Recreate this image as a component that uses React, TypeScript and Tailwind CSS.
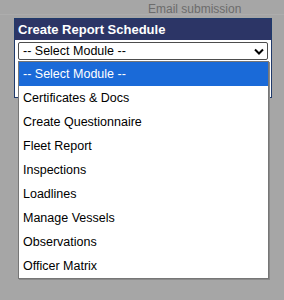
import React from "react";

const modules = [
  "-- Select Module --",
  "Certificates & Docs",
  "Create Questionnaire",
  "Fleet Report",
  "Inspections",
  "Loadlines",
  "Manage Vessels",
  "Observations",
  "Officer Matrix",
];

const App = () => {
  return (
    <div className="relative w-[284px] h-[300px] bg-[#a6a6a6] overflow-hidden font-['Liberation_Sans',Arial,sans-serif]">
      <div className="h-[15px] border-b border-[#adadad] relative">
        <span className="absolute left-[148px] top-[2px] text-[12px] leading-[15px] text-[#6c6c6c]">Email submission</span>
      </div>
      <div className="ml-[14px] mt-[3px] w-[258px] border border-[#1f3a6b] bg-white">
        <div className="h-[21px] bg-[#2c3566] px-[3px] text-[13px] leading-[22px] font-bold text-white">
          Create Report Schedule
        </div>
        <div className="px-[3px] pt-[2px] pb-[37px]">
          <div className="flex items-center justify-between h-[18px] border border-[#4d4d4d] rounded-[2px] pl-[4px] pr-[3px] text-[12.5px] text-black">
            <span>-- Select Module --</span>
            <svg width="10" height="7" viewBox="0 0 10 7">
              <path d="M1 1.5 L5 5.5 L9 1.5" stroke="#000" strokeWidth="2" fill="none" />
            </svg>
          </div>
        </div>
      </div>
      <div className="absolute left-[18px] top-[61px] w-[251px] border border-[#767676] bg-white shadow-[1px_1px_0_#8a8a8a]">
        {modules.map((m, i) => (
          <div
            key={m}
            className={
              i === 0
                ? "h-[24px] pl-[4px] text-[12.5px] leading-[24px] bg-[#1a6ad8] text-white"
                : "h-[24px] pl-[4px] text-[12.5px] leading-[24px] text-black"
            }
          >
            {m}
          </div>
        ))}
      </div>
    </div>
  );
};

export default App;
